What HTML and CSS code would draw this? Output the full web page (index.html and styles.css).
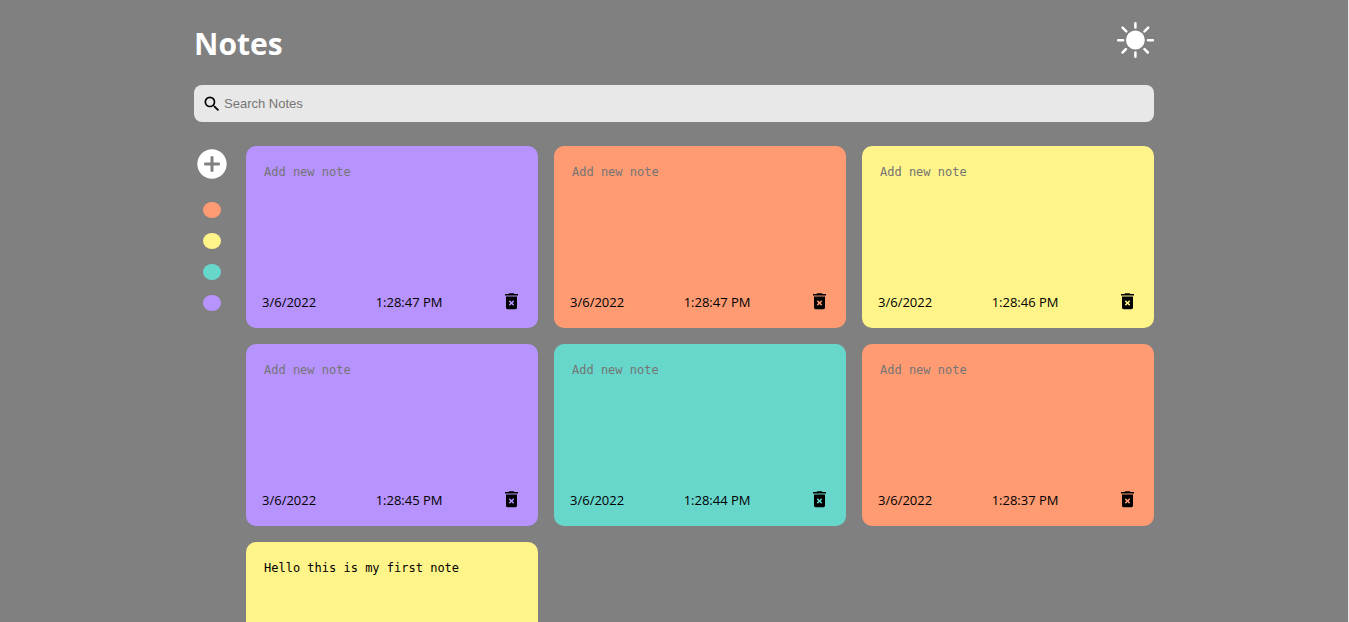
FILE: index.html
```html
<!DOCTYPE html>
<html lang="en">
<head>
<meta charset="utf-8">
<meta name="viewport" content="width=device-width, initial-scale=1">
<title>Notes</title>
<link rel="stylesheet" href="styles.css">
</head>
<body>
<svg class="sprite" aria-hidden="true">
  <symbol id="trash" viewBox="0 0 20 20"><path fill-rule="evenodd" d="M12.500 2l-.8-.8H7.300L6.500 2H3v1.600h13V2zM4 4.600V15.500c0 1 .7 1.700 1.700 1.700h7.600c1 0 1.700-.7 1.700-1.700V4.600zm3.900 3.700l1.600 1.600 1.600-1.600 1.100 1.100-1.600 1.600 1.600 1.600-1.100 1.100-1.600-1.600-1.600 1.600-1.100-1.100L8.400 11 6.800 9.400z"/></symbol>
</svg>
<div class="page">
  <div class="container">
    <header class="header">
      <h1 class="title">Notes</h1>
      <button class="icon-button" type="button" aria-label="Toggle theme">
        <svg class="sun" viewBox="0 0 38 38"><circle cx="19.400" cy="19" r="9.400" fill="#fff"/><path d="M19.400 2.300v4.300M19.400 31.500v4.300M2.200 19.200h4.900M32 19.200h4.900M6.600 6.600l3.700 3.700M28.500 28.200l3.300 3.300M6.600 31.500l3.300-3.300M28.500 10.300l3.700-3.700" stroke="#fff" stroke-width="2.500" stroke-linecap="round"/></svg>
      </button>
    </header>
    <div class="search">
      <svg class="search-icon" viewBox="0 0 24 24" aria-hidden="true"><path d="M15.500 14h-.79l-.28-.27A6.471 6.471 0 0 0 16 9.500 6.500 6.500 0 1 0 9.500 16c1.610 0 3.090-.59 4.230-1.570l.27.28v.79l5 4.990L20.490 19l-4.990-5zm-6 0C7.010 14 5 11.990 5 9.500S7.010 5 9.500 5 14 7.010 14 9.500 11.990 14 9.500 14z"/></svg>
      <input class="search-input" type="text" placeholder="Search Notes" aria-label="Search Notes">
    </div>
    <main class="content">
      <div class="palette">
        <button class="icon-button" type="button" aria-label="Add note">
          <svg class="plus" viewBox="0 0 24 24"><path fill="#fff" d="M12 2.200C6.590 2.200 2.200 6.590 2.200 12s4.390 9.800 9.800 9.800 9.800-4.390 9.800-9.800S17.410 2.200 12 2.200zm5.200 10.800H13v4.200h-2V13H6.800v-2H11V6.800h2V11h4.200v2z"/></svg>
        </button>
        <div class="swatches">
          <button class="swatch orange" type="button" aria-label="Orange note"></button>
          <button class="swatch yellow" type="button" aria-label="Yellow note"></button>
          <button class="swatch teal" type="button" aria-label="Teal note"></button>
          <button class="swatch purple" type="button" aria-label="Purple note"></button>
        </div>
      </div>
      <section class="notes">
        <article class="note purple"><textarea class="note-text" placeholder="Add new note" aria-label="Note"></textarea><footer class="note-footer"><span>3/6/2022</span><span>1:28:47 PM</span><button class="icon-button" type="button" aria-label="Delete note"><svg class="trash"><use href="#trash"/></svg></button></footer></article>
        <article class="note orange"><textarea class="note-text" placeholder="Add new note" aria-label="Note"></textarea><footer class="note-footer"><span>3/6/2022</span><span>1:28:47 PM</span><button class="icon-button" type="button" aria-label="Delete note"><svg class="trash"><use href="#trash"/></svg></button></footer></article>
        <article class="note yellow"><textarea class="note-text" placeholder="Add new note" aria-label="Note"></textarea><footer class="note-footer"><span>3/6/2022</span><span>1:28:46 PM</span><button class="icon-button" type="button" aria-label="Delete note"><svg class="trash"><use href="#trash"/></svg></button></footer></article>
        <article class="note purple"><textarea class="note-text" placeholder="Add new note" aria-label="Note"></textarea><footer class="note-footer"><span>3/6/2022</span><span>1:28:45 PM</span><button class="icon-button" type="button" aria-label="Delete note"><svg class="trash"><use href="#trash"/></svg></button></footer></article>
        <article class="note teal"><textarea class="note-text" placeholder="Add new note" aria-label="Note"></textarea><footer class="note-footer"><span>3/6/2022</span><span>1:28:44 PM</span><button class="icon-button" type="button" aria-label="Delete note"><svg class="trash"><use href="#trash"/></svg></button></footer></article>
        <article class="note orange"><textarea class="note-text" placeholder="Add new note" aria-label="Note"></textarea><footer class="note-footer"><span>3/6/2022</span><span>1:28:37 PM</span><button class="icon-button" type="button" aria-label="Delete note"><svg class="trash"><use href="#trash"/></svg></button></footer></article>
        <article class="note yellow"><textarea class="note-text" placeholder="Add new note" aria-label="Note">Hello this is my first note</textarea></article>
      </section>
    </main>
  </div>
</div>
</body>
</html>
```
FILE: styles.css
```css
* {
  box-sizing: border-box;
}

body {
  margin: 0;
  background: #808080;
  font-family: "Open Sans", "Noto Sans", sans-serif;
}

.sprite {
  display: none;
}

.page {
  height: 100vh;
  overflow: hidden auto;
  scrollbar-width: none;
  border-right: 1px solid #e8e8e8;
}

.container {
  max-width: 992px;
  margin: 0 auto;
  padding: 0 16px 16px;
}

.header {
  display: flex;
  align-items: center;
  justify-content: space-between;
  padding: 20px 0 17px;
}

.title {
  margin: 0;
  color: #fff;
  font-size: 30px;
  line-height: 48px;
  font-weight: 700;
}

.icon-button {
  display: block;
  padding: 0;
  border: 0;
  background: none;
  cursor: pointer;
}

.icon-button svg {
  display: block;
}

.sun {
  width: 38px;
  height: 38px;
  margin-bottom: 8px;
}

.search {
  display: flex;
  align-items: center;
  height: 37px;
  padding: 0 8px;
  border-radius: 8px;
  background: #e8e8e8;
}

.search-icon {
  width: 20px;
  height: 20px;
}

.search-input {
  flex: 1;
  min-width: 0;
  padding: 2px;
  border: 0;
  outline: 0;
  background: transparent;
  font-family: "Liberation Sans", Arial, sans-serif;
  font-size: 13px;
}

.search-input::placeholder,
.note-text::placeholder {
  color: #757575;
}

.content {
  display: flex;
  gap: 16px;
  margin-top: 24px;
}

.palette {
  display: flex;
  flex-direction: column;
  align-items: center;
  width: 36px;
}

.plus {
  width: 36px;
  height: 36px;
}

.swatches {
  display: flex;
  flex-direction: column;
  gap: 15px;
  margin-top: 20px;
}

.swatch {
  width: 18px;
  height: 16px;
  padding: 0;
  border: 0;
  border-radius: 50%;
  cursor: pointer;
}

.notes {
  display: grid;
  flex: 1;
  grid-template-columns: repeat(auto-fill, minmax(240px, 1fr));
  grid-auto-rows: 182px;
  gap: 16px;
}

.note {
  display: flex;
  flex-direction: column;
  padding: 16px;
  border-radius: 10px;
}

.note-text {
  flex: 1;
  width: 100%;
  padding: 2px;
  border: 0;
  outline: 0;
  resize: none;
  background: transparent;
  color: #000;
  font-family: "DejaVu Sans Mono", monospace;
  font-size: 12px;
  line-height: 16px;
}

.note-footer {
  display: flex;
  align-items: center;
  justify-content: space-between;
  color: #000;
  font-size: 13px;
  line-height: 20px;
}

.trash {
  width: 20px;
  height: 20px;
}

.purple {
  background: #b693fd;
}

.orange {
  background: #ff9b73;
}

.yellow {
  background: #fff48a;
}

.teal {
  background: #67d7cc;
}
```
